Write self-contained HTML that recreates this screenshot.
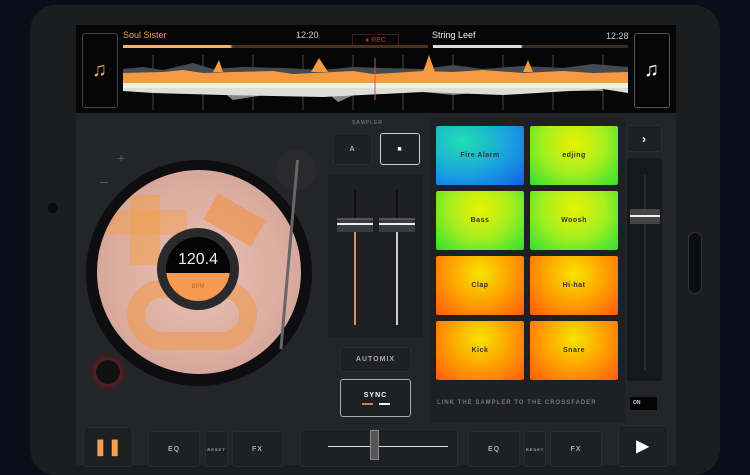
<!DOCTYPE html>
<html><head><style>
*{margin:0;padding:0;box-sizing:border-box}
body{width:750px;height:457px;background:#0a0e18;position:relative;overflow:hidden;font-family:"Liberation Sans",sans-serif}
.a{position:absolute}
.btn{position:absolute;background:#1f2023;border:1px solid #2c2d31;border-radius:3px;color:#aaa;font-size:7px;font-weight:bold;display:flex;align-items:center;justify-content:center;letter-spacing:1px}
.pad{position:absolute;width:88px;height:59px;border-radius:2px;font-size:7px;font-weight:bold;color:#333;display:flex;align-items:center;justify-content:center;letter-spacing:.5px}
.g{background:radial-gradient(ellipse at 50% 30%,#e8f000,#a6ef20 50%,#2ee030)}
.o{background:radial-gradient(ellipse at 50% 30%,#f6e400,#ff9a00 55%,#ff5a10)}
.b{background:radial-gradient(ellipse at 30% 25%,#20e0b0,#1aa0e0 55%,#1060e8)}
</style></head><body>
<div class="a" style="left:30px;top:5px;width:690px;height:470px;background:#1c1d1f;border-radius:26px"></div>
<div class="a" style="left:48px;top:203px;width:10px;height:10px;border-radius:50%;background:#08090b"></div>
<div class="a" style="left:688px;top:232px;width:14px;height:62px;border-radius:7px;background:#0c0d0f;border:1px solid #333"></div>
<div class="a" style="left:76px;top:25px;width:600px;height:440px;background:#242529"></div>
<div class="a" style="left:76px;top:25px;width:600px;height:88px;background:#060606"></div>
<div class="btn" style="left:82px;top:33px;width:36px;height:75px;background:#060606;border-color:#444;color:#f0a050;font-size:20px">♫</div>
<div class="btn" style="left:634px;top:33px;width:36px;height:75px;background:#060606;border-color:#555;color:#fff;font-size:20px">♫</div>
<div class="a" style="left:123px;top:30px;color:#f0a050;font-size:9px">Soul Sister</div>
<div class="a" style="left:296px;top:30px;color:#ccc;font-size:9px">12:20</div>
<div class="a" style="left:432px;top:30px;color:#eee;font-size:9px">String Leef</div>
<div class="a" style="left:606px;top:31px;color:#ccc;font-size:9px">12:28</div>
<div class="a" style="left:352px;top:34px;width:47px;height:14px;border:1px solid #3a2020;color:#c03030;font-size:7px;text-align:center;line-height:12px">● REC</div>
<div class="a" style="left:123px;top:45px;width:305px;height:3px;background:linear-gradient(90deg,#f0b070 35%,#4a3020 36%)"></div>
<div class="a" style="left:433px;top:45px;width:195px;height:3px;background:linear-gradient(90deg,#ddd 45%,#3a2a20 46%)"></div>
<svg class="a" style="left:123px;top:55px" width="505" height="55">
<g stroke="#444" stroke-width="1"><line x1="30" y1="0" x2="30" y2="55"/><line x1="80" y1="0" x2="80" y2="55"/><line x1="130" y1="0" x2="130" y2="55"/><line x1="180" y1="0" x2="180" y2="55"/><line x1="230" y1="0" x2="230" y2="55"/><line x1="280" y1="0" x2="280" y2="55"/><line x1="330" y1="0" x2="330" y2="55"/><line x1="380" y1="0" x2="380" y2="55"/><line x1="430" y1="0" x2="430" y2="55"/><line x1="480" y1="0" x2="480" y2="55"/></g>
<path d="M0 14 L20 12 L40 15 L70 8 L90 14 L120 12 L160 13 L200 15 L230 12 L260 13 L300 14 L330 10 L360 14 L400 11 L440 13 L470 9 L505 12 L505 22 L0 22Z" fill="#454a52"/>
<path d="M0 18 L40 17 L60 15 L80 18 L110 17 L150 16 L170 19 L190 18 L210 17 L230 16 L250 19 L270 18 L300 16 L330 17 L360 15 L400 18 L440 16 L470 18 L505 17 L505 28 L0 28Z" fill="#f59a40"/>
<path d="M90 17 L96 5 L100 17Z M188 17 L196 3 L205 17Z M300 17 L306 0 L312 17Z M400 17 L405 5 L410 17Z" fill="#f59a40"/>
<path d="M0 28 L505 28 L505 33 L0 33Z" fill="#eee"/>
<path d="M95 33 L110 45 L160 37 L200 34 L215 47 L240 36 L280 35 L330 40 L380 35 L430 36 L480 34 L480 36 L95 36Z" fill="#888"/>
<path d="M0 33 L505 33 L505 38 L480 34 L380 40 L300 37 L200 42 L100 40 L30 38 L0 36Z" fill="#ddd"/>
<line x1="252" y1="3" x2="252" y2="45" stroke="#e05030"/>
</svg>
<!-- turntable -->
<div class="a" style="left:86px;top:160px;width:226px;height:226px;border-radius:50%;background:#0e0e10"></div>
<div class="a" style="left:97px;top:170px;width:204px;height:204px;border-radius:50%;overflow:hidden;background:radial-gradient(circle,#e8c0b4,#dcaca0 60%,#cc9890);">
<div class="a" style="left:33px;top:25px;width:30px;height:70px;background:#f0a050;opacity:.6"></div>
<div class="a" style="left:10px;top:40px;width:80px;height:25px;background:#f0a050;opacity:.5"></div>
<div class="a" style="left:110px;top:35px;width:55px;height:30px;background:#f09040;opacity:.6;transform:rotate(30deg)"></div>
<div class="a" style="left:30px;top:110px;width:130px;height:70px;border-radius:40px;border:18px solid #f09848;opacity:.55"></div>
</div>
<div class="a" style="left:157px;top:228px;width:82px;height:82px;border-radius:50%;background:#2a2a2c"></div>
<div class="a" style="left:166px;top:237px;width:64px;height:64px;border-radius:50%;overflow:hidden;background:#050505">
<div style="position:absolute;left:0;top:36px;width:64px;height:28px;background:#f59a50"></div>
<div style="position:absolute;width:64px;top:14px;text-align:center;color:#eee;font-size:16px">120.4</div>
<div style="position:absolute;width:64px;top:47px;text-align:center;color:#c06030;font-size:6px">BPM</div></div>
<div class="a" style="left:276px;top:150px;width:40px;height:40px;border-radius:50%;background:#2a2a2c"></div>
<div class="a" style="left:296px;top:160px;width:3px;height:190px;background:#666;transform:rotate(5deg);transform-origin:top"></div>
<div class="a" style="left:96px;top:360px;width:24px;height:24px;border-radius:50%;background:#111;box-shadow:0 0 8px #c01010"></div>
<div class="a" style="left:117px;top:150px;color:#555;font-size:14px">+</div>
<div class="a" style="left:100px;top:173px;color:#555;font-size:14px">–</div>
<!-- sampler -->
<div class="a" style="left:352px;top:120px;color:#888;font-size:5px;letter-spacing:1px">SAMPLER</div>
<div class="btn" style="left:333px;top:133px;width:39px;height:32px">A</div>
<div class="btn" style="left:380px;top:133px;width:40px;height:32px;border-color:#ccc;color:#fff">■</div>
<div class="a" style="left:328px;top:175px;width:95px;height:162px;background:#1e1f22"></div>
<div class="a" style="left:354px;top:190px;width:2px;height:135px;background:linear-gradient(#111 30%,#d09060 30%)"></div>
<div class="a" style="left:396px;top:190px;width:2px;height:135px;background:linear-gradient(#111 30%,#ccc 30%)"></div>
<div class="a" style="left:337px;top:218px;width:36px;height:14px;background:#3a3b3f;border-top:2px solid #555"><div style="margin-top:3px;height:2px;background:#eee"></div></div>
<div class="a" style="left:379px;top:218px;width:36px;height:14px;background:#3a3b3f;border-top:2px solid #555"><div style="margin-top:3px;height:2px;background:#eee"></div></div>
<div class="btn" style="left:340px;top:347px;width:71px;height:25px">AUTOMIX</div>
<div class="btn" style="left:340px;top:379px;width:71px;height:38px;border-color:#aaa;color:#fff;flex-direction:column">SYNC<div style="margin-top:4px;width:28px;height:2px;background:linear-gradient(90deg,#c08060 40%,transparent 40%,transparent 60%,#eee 60%)"></div></div>
<!-- pads -->
<div class="a" style="left:430px;top:118px;width:195px;height:305px;background:#1f2023"></div>
<div class="pad b" style="left:436px;top:126px">Fire Alarm</div>
<div class="pad g" style="left:530px;top:126px">edjing</div>
<div class="pad g" style="left:436px;top:191px">Bass</div>
<div class="pad g" style="left:530px;top:191px">Woosh</div>
<div class="pad o" style="left:436px;top:256px">Clap</div>
<div class="pad o" style="left:530px;top:256px">Hi-hat</div>
<div class="pad o" style="left:436px;top:321px">Kick</div>
<div class="pad o" style="left:530px;top:321px">Snare</div>
<div class="btn" style="left:627px;top:125px;width:35px;height:27px;color:#fff;font-size:12px">›</div>
<div class="a" style="left:627px;top:158px;width:35px;height:223px;background:#17181a;border-radius:3px"></div>
<div class="a" style="left:644px;top:175px;width:2px;height:195px;background:#2a2b2e"></div>
<div class="a" style="left:630px;top:209px;width:30px;height:15px;background:#444"><div style="margin-top:6px;height:2px;background:#eee"></div></div>
<div class="a" style="left:437px;top:400px;color:#777;font-size:6px;font-weight:bold;letter-spacing:1px">LINK THE SAMPLER TO THE CROSSFADER</div>
<div class="a" style="left:630px;top:397px;width:27px;height:13px;background:#050505;color:#ddd;font-size:5px;font-weight:bold;line-height:13px;padding-left:3px">ON</div>
<!-- bottom -->
<div class="btn" style="left:83px;top:427px;width:50px;height:40px;color:#f0a050;font-size:16px">❚❚</div>
<div class="btn" style="left:148px;top:431px;width:52px;height:36px">EQ</div>
<div class="btn" style="left:205px;top:431px;width:23px;height:36px;font-size:4px">RESET</div>
<div class="btn" style="left:232px;top:431px;width:51px;height:36px">FX</div>
<div class="btn" style="left:300px;top:429px;width:158px;height:38px"></div>
<div class="a" style="left:328px;top:446px;width:120px;height:1px;background:#ddd"></div>
<div class="a" style="left:370px;top:430px;width:9px;height:30px;background:#555;border:1px solid #888"></div>
<div class="btn" style="left:468px;top:431px;width:52px;height:36px">EQ</div>
<div class="btn" style="left:524px;top:431px;width:22px;height:36px;font-size:4px">RESET</div>
<div class="btn" style="left:550px;top:431px;width:52px;height:36px">FX</div>
<div class="btn" style="left:618px;top:425px;width:50px;height:42px;color:#fff;font-size:16px">▶</div>
</body></html>
